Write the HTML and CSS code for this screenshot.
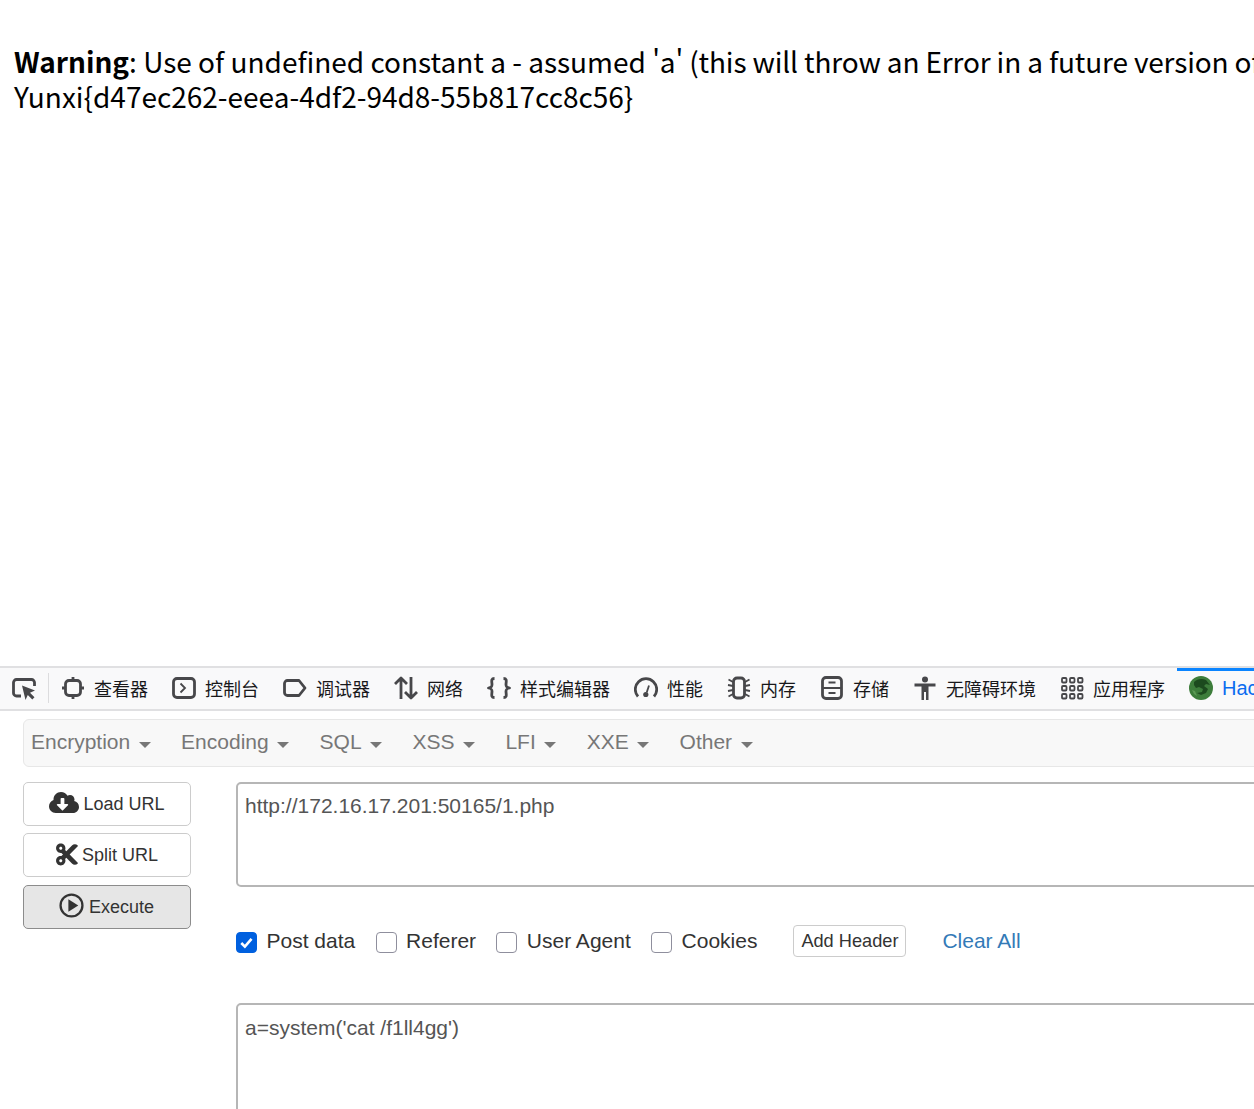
FILE: index.html
```html
<!DOCTYPE html>
<html lang="zh">
<head>
<meta charset="utf-8">
<title>HackBar</title>
<link rel="stylesheet" href="styles.css">
</head>
<body>
<main class="page">
  <p class="output"><br><b>Warning</b>: Use of undefined constant a - assumed <span class="tight">'a' (this will throw an Error in a future version of PHP</span><br>Yunxi{d47ec262-eeea-4df2-94d8-55b817cc8c56}</p>
</main>
<section class="devtools">
  <div class="toolbar">
    <button class="pick" aria-label="pick">
      <svg class="ico" viewBox="0 0 24 24"><path d="M9 20H4.500A3 3 0 0 1 1.500 17V6.500A3 3 0 0 1 4.500 3.500h15A3 3 0 0 1 22.500 6.500V10" class="ln"/><path d="M10 9.500 23 14.500l-5 2.200 4.500 4.500-2.200 2.300-4.500-4.600-2.300 5z" class="fl"/></svg>
    </button>
    <div class="tab"><svg class="ico" viewBox="0 0 24 24"><rect x="4.500" y="4.500" width="15" height="15" rx="3.500" class="ln"/><path d="M12 1v3.500M12 19.500V23M1 12h3.500M19.500 12H23" class="ln"/></svg><span>查看器</span></div>
    <div class="tab"><svg class="ico" viewBox="0 0 24 24"><rect x="1.500" y="2.500" width="21" height="19" rx="3.500" class="ln"/><path d="m8.500 7.500 4.500 4.500-4.500 4.500" class="thin"/></svg><span>控制台</span></div>
    <div class="tab"><svg class="ico" viewBox="0 0 24 24"><path d="M4.500 4.500h11.500l6 7.500-6 7.500H4.500A3 3 0 0 1 1.500 16.500V7.500A3 3 0 0 1 4.500 4.500z" class="ln"/></svg><span>调试器</span></div>
    <div class="tab"><svg class="ico" viewBox="0 0 24 24"><path d="M7 23V2M1 8l6-6 6 6M17 1v21M11 16l6 6 6-6" class="ln"/></svg><span>网络</span></div>
    <div class="tab"><svg class="ico" viewBox="0 0 24 24"><path d="M7.500 2.500C3.500 2.500 5 6 5 8.500S4 11.500 1.500 12C4 12.500 5 13 5 15.500S3.500 21.500 7.500 21.500M16.500 2.500C20.500 2.500 19 6 19 8.500s1 3 3.500 3.500c-2.500.5-3.500 1-3.500 3.500s1.500 6-2.500 6" class="ln"/></svg><span>样式编辑器</span></div>
    <div class="tab"><svg class="ico" viewBox="0 0 24 24"><path d="M4 20.500A10.700 10.700 0 1 1 20 20.500" class="ln"/><path d="m15 9.500-2.300 7" class="thin"/><circle cx="11.800" cy="18.500" r="2.600" class="fl"/></svg><span>性能</span></div>
    <div class="tab"><svg class="ico" viewBox="0 0 24 24"><rect x="6.500" y="2" width="11" height="20" rx="3.500" class="ln"/><path d="M6 6 1.500 3.500M6 10 1 9M6 14l-5 1M6 18l-4.500 2.500M18 6l4.500-2.500M18 10l5-1M18 14l5 1M18 18l4.500 2.500" class="thin"/></svg><span>内存</span></div>
    <div class="tab"><svg class="ico" viewBox="0 0 24 24"><rect x="2.500" y="1.500" width="19" height="21" rx="3.500" class="ln"/><path d="M2.500 12h19M8.500 6.500h7M8.500 17h7" class="thin"/></svg><span>存储</span></div>
    <div class="tab"><svg class="ico" viewBox="0 0 24 24"><circle cx="12" cy="3.500" r="3" class="fl"/><path d="M1.500 7.500h21v3h-7V24h-2.500v-8h-2v8H8.500V10.500h-7z" class="fl"/></svg><span>无障碍环境</span></div>
    <div class="tab"><svg class="ico" viewBox="0 0 24 24"><g class="grid"><rect x="2" y="2" width="4.500" height="4.500" rx="1"/><rect x="10" y="2" width="4.500" height="4.500" rx="1"/><rect x="18" y="2" width="4.500" height="4.500" rx="1"/><rect x="2" y="10" width="4.500" height="4.500" rx="1"/><rect x="10" y="10" width="4.500" height="4.500" rx="1"/><rect x="18" y="10" width="4.500" height="4.500" rx="1"/><rect x="2" y="18" width="4.500" height="4.500" rx="1"/><rect x="10" y="18" width="4.500" height="4.500" rx="1"/><rect x="18" y="18" width="4.500" height="4.500" rx="1"/></g></svg><span>应用程序</span></div>
    <div class="tab active"><svg class="ico" viewBox="0 0 24 24"><circle cx="12" cy="12" r="12" fill="#3d7d3b"/><path d="M5 6c3-3 8-4 12-2l4 5-4-1-2 2 4 3-2 4-5 2-4-2 5-1 1-3-4-2-3 1-2-3z" fill="#1c4a1e"/><path d="M3 14l3 1 2 5-3-2z" fill="#5c9a55"/></svg><span>HackBar</span></div>
  </div>
  <div class="hackbar">
    <nav class="menu">
      <a>Encryption <i></i></a><a>Encoding <i></i></a><a>SQL <i></i></a><a>XSS <i></i></a><a>LFI <i></i></a><a>XXE <i></i></a><a>Other <i></i></a>
    </nav>
    <div class="work">
      <div class="actions">
        <button class="btn"><svg class="fa cloud" viewBox="0 0 640 512"><path d="M537.6 226.600c4.100-10.700 6.400-22.400 6.400-34.600 0-53-43-96-96-96-19.700 0-38.100 6-53.300 16.200C367 64.200 315.300 32 256 32c-88.400 0-160 71.600-160 160 0 2.700.1 5.400.2 8.100C40.200 219.800 0 273.200 0 336c0 79.500 64.500 144 144 144h368c70.700 0 128-57.300 128-128 0-61.900-44-113.600-102.400-125.400zm-132.900 88.700L299.300 420.700c-6.200 6.200-16.400 6.200-22.600 0L171.300 315.300c-10.100-10.100-2.900-27.300 11.300-27.300H248V176c0-8.800 7.200-16 16-16h48c8.800 0 16 7.200 16 16v112h65.400c14.200 0 21.400 17.200 11.300 27.300z"/></svg>Load URL</button>
        <button class="btn"><svg class="fa cut" viewBox="0 0 448 512"><path d="M278.060 256L444.480 89.570c4.690-4.690 4.690-12.290 0-16.970-32.800-32.800-85.990-32.800-118.790 0L210.180 188.120l-24.860-24.860c4.310-10.920 6.680-22.810 6.680-35.260 0-53.020-42.980-96-96-96S0 74.980 0 128s42.980 96 96 96c4.540 0 8.990-.32 13.360-.93L142.290 256l-32.930 32.930c-4.370-.61-8.830-.93-13.360-.93-53.020 0-96 42.980-96 96s42.980 96 96 96 96-42.980 96-96c0-12.450-2.370-24.340-6.680-35.260l24.860-24.860L325.690 439.400c32.800 32.800 85.990 32.800 118.790 0 4.690-4.680 4.690-12.280 0-16.970L278.060 256zM96 160c-17.640 0-32-14.360-32-32s14.360-32 32-32 32 14.360 32 32-14.360 32-32 32zm0 256c-17.640 0-32-14.360-32-32s14.360-32 32-32 32 14.360 32 32-14.360 32-32 32z"/></svg>Split URL</button>
        <button class="btn exec"><svg class="fa play" viewBox="0 0 24 24"><circle cx="12" cy="12" r="10.500" fill="none" stroke="#333" stroke-width="2.200"/><path d="M9 6 18.500 12 9 18z"/></svg>Execute</button>
      </div>
      <div class="fields">
        <div class="box url">http://172.16.17.201:50165/1.php</div>
        <div class="opts">
          <label class="opt"><span class="chk on"><svg viewBox="0 0 20 20"><path d="m4.500 10.500 3.800 3.800 7-8"/></svg></span>Post data</label>
          <label class="opt"><span class="chk"></span>Referer</label>
          <label class="opt"><span class="chk"></span>User Agent</label>
          <label class="opt"><span class="chk"></span>Cookies</label>
          <button class="add">Add Header</button>
          <a class="clear">Clear All</a>
        </div>
        <div class="box post">a=system('cat /f1ll4gg')</div>
      </div>
    </div>
  </div>
</section>
</body>
</html>
```
FILE: styles.css
```css
* { box-sizing: border-box; }
html, body { margin: 0; height: 1109px; overflow: hidden; background: #fff; }
body { display: flex; flex-direction: column; width: 1254px; }
.page { height: 666px; flex: none; padding: 0 14px; overflow: hidden; }
.output {
  margin: 9px 0 0; width: 1400px; font: 28px/35px "Noto Sans CJK SC", "Noto Sans", sans-serif; color: #000; white-space: nowrap;
}
.output b { font-weight: 700; }
.tight { letter-spacing: -0.150px; }
.devtools { flex: none; width: 1400px; }
.toolbar {
  display: flex; height: 45px; background: #f9f9fa;
  border-top: 2px solid #e0e0e2; border-bottom: 2px solid #e0e0e2;
}
.pick {
  width: 37px; padding: 0 0 2px 12px; border: 0; background: none; display: flex; align-items: center;
  box-sizing: content-box;
}
.pick::after { content: ""; width: 1px; height: 30px; background: #dcdcde; margin-left: 12px; flex: none; }
.ico { width: 24px; height: 24px; flex: none; display: block; }
.ln { fill: none; stroke: #47474a; stroke-width: 2.800; stroke-linejoin: round; }
.thin { fill: none; stroke: #47474a; stroke-width: 1.800; }
.fl { fill: #47474a; }
.grid rect { fill: none; stroke: #47474a; stroke-width: 1.800; }
.tab {
  display: flex; align-items: center; gap: 9px; padding: 0 12px 2px; height: 41px; flex: none;
  font: 18px/24px "Noto Sans CJK SC", sans-serif; color: #18181a;
}
.tab.active { color: #0a6cf0; box-shadow: inset 0 3px 0 #0a84ff; font-family: "Liberation Sans", sans-serif; font-size: 20px; }
.hackbar { padding: 8px 0 0 23px; }
.menu {
  display: flex; height: 48px; align-items: center; width: 1300px; padding-left: 7px; gap: 30.400px;
  background: #f8f8f8; border: 1px solid #e7e7e7; border-radius: 6px;
  font: 21px/30px "Liberation Sans", sans-serif; color: #777;
}
.menu a { display: flex; align-items: center; gap: 8.500px; white-space: nowrap; padding-bottom: 2px; }
.menu i { width: 0; height: 0; border: 6px solid transparent; border-top-color: #777; border-bottom: 0; margin-top: 5px; }
.work { display: flex; margin-top: 15px; gap: 45px; }
.actions { width: 168px; display: flex; flex-direction: column; flex: none; }
.btn {
  height: 44px; display: flex; align-items: center; justify-content: center; gap: 4px; padding: 0; margin-bottom: 7px;
  background: #fff; border: 1px solid #ccc; border-radius: 5px;
  font: 18px/24px "Liberation Sans", sans-serif; color: #333;
}
.btn.exec { background: #e6e6e6; border-color: #8c8c8c; gap: 5px; margin-top: 1px; }
.fa { display: block; fill: #333; }
.cloud { width: 30px; height: 25px; margin-top: -4px; }
.cut { width: 22px; height: 25px; margin-top: -2px; }
.play { width: 25px; height: 25px; margin: -4px 0 0 -1px; }
.fields { width: 1100px; flex: none; }
.box {
  height: 105px; padding: 7px; border: 2px solid #b6b6b6; border-radius: 5px;
  font: 21px/30px "Liberation Sans", sans-serif; color: #555;
}
.post { height: 140px; padding-top: 8px; }
.opts { display: flex; align-items: center; height: 32px; margin-top: 38px; margin-bottom: 46px; font: 21px/30px "Liberation Sans", sans-serif; color: #333; }
.opt { display: flex; align-items: center; gap: 9.500px; margin-right: 20.300px; }
.chk { width: 21px; height: 21px; border: 1px solid #8f8f9d; border-radius: 4px; background: #fff; flex: none; margin-top: 2px; }
.chk.on { background: #0060df; border-color: #0060df; }
.chk svg { display: block; width: 19px; height: 19px; fill: none; stroke: #fff; stroke-width: 2.800; }
.add {
  height: 32px; width: 113px; padding: 0; margin-left: 15.700px; background: #fff; border: 1px solid #ccc; border-radius: 4px;
  font: 18.200px/24px "Liberation Sans", sans-serif; color: #333;
}
.clear { margin-left: 36px; color: #337ab7; }
```
